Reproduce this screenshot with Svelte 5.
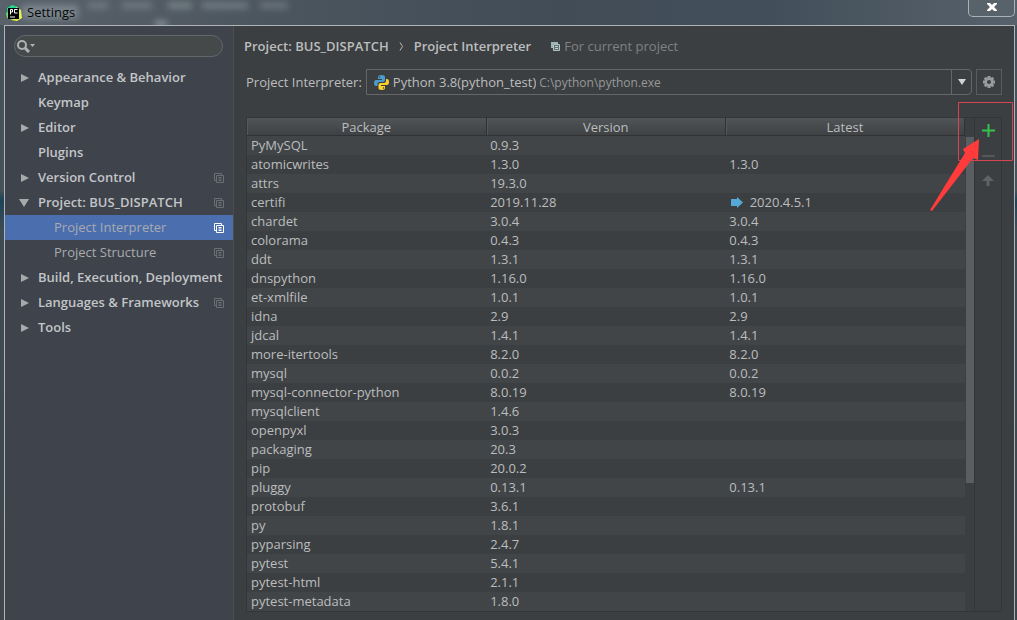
<script lang="ts">
  type TreeItem = { label: string; arrow?: 'right' | 'down'; child?: boolean; scoped?: boolean };
  type Package = { name: string; version: string; latest?: string; upgrade?: boolean };

  const tree: TreeItem[] = [
    { label: 'Appearance & Behavior', arrow: 'right' },
    { label: 'Keymap' },
    { label: 'Editor', arrow: 'right' },
    { label: 'Plugins' },
    { label: 'Version Control', arrow: 'right', scoped: true },
    { label: 'Project: BUS_DISPATCH', arrow: 'down', scoped: true },
    { label: 'Project Interpreter', child: true, scoped: true },
    { label: 'Project Structure', child: true, scoped: true },
    { label: 'Build, Execution, Deployment', arrow: 'right' },
    { label: 'Languages & Frameworks', arrow: 'right', scoped: true },
    { label: 'Tools', arrow: 'right' }
  ];

  const packages: Package[] = [
    { name: 'PyMySQL', version: '0.9.3' },
    { name: 'atomicwrites', version: '1.3.0', latest: '1.3.0' },
    { name: 'attrs', version: '19.3.0' },
    { name: 'certifi', version: '2019.11.28', latest: '2020.4.5.1', upgrade: true },
    { name: 'chardet', version: '3.0.4', latest: '3.0.4' },
    { name: 'colorama', version: '0.4.3', latest: '0.4.3' },
    { name: 'ddt', version: '1.3.1', latest: '1.3.1' },
    { name: 'dnspython', version: '1.16.0', latest: '1.16.0' },
    { name: 'et-xmlfile', version: '1.0.1', latest: '1.0.1' },
    { name: 'idna', version: '2.9', latest: '2.9' },
    { name: 'jdcal', version: '1.4.1', latest: '1.4.1' },
    { name: 'more-itertools', version: '8.2.0', latest: '8.2.0' },
    { name: 'mysql', version: '0.0.2', latest: '0.0.2' },
    { name: 'mysql-connector-python', version: '8.0.19', latest: '8.0.19' },
    { name: 'mysqlclient', version: '1.4.6' },
    { name: 'openpyxl', version: '3.0.3' },
    { name: 'packaging', version: '20.3' },
    { name: 'pip', version: '20.0.2' },
    { name: 'pluggy', version: '0.13.1', latest: '0.13.1' },
    { name: 'protobuf', version: '3.6.1' },
    { name: 'py', version: '1.8.1' },
    { name: 'pyparsing', version: '2.4.7' },
    { name: 'pytest', version: '5.4.1' },
    { name: 'pytest-html', version: '2.1.1' },
    { name: 'pytest-metadata', version: '1.8.0' }
  ];

  const interpreters = [{ name: 'Python 3.8(python_test)', path: 'C:\\python\\python.exe' }];

  let query = $state('');
  let selected = $state('Project Interpreter');
  let interpreter = $state(interpreters[0]);
</script>

{#snippet copyIcon()}
  <svg class="copy-icon" width="10" height="10" viewBox="0 0 10 10" fill="none" stroke="currentColor" aria-hidden="true">
    <path d="M2.5 7.5h-2v-7h7v2"></path>
    <path d="M2.5 2.5h7v7h-7z"></path>
    <path d="M4.5 4.5h3M4.5 6h3M4.5 7.5h3"></path>
  </svg>
{/snippet}

<div class="window">
  <header class="titlebar">
    <svg class="glass" viewBox="0 0 340 26" width="340" height="26" aria-hidden="true">
      <defs>
        <filter id="soft" x="-20%" y="-50%" width="140%" height="200%"><feGaussianBlur stdDeviation="3"></feGaussianBlur></filter>
      </defs>
      <g filter="url(#soft)" fill="#a9b4ba">
        <rect x="22" y="5" width="56" height="14" opacity="0.45"></rect>
        <rect x="88" y="2" width="20" height="7" opacity="0.3"></rect>
        <rect x="122" y="2" width="30" height="7" opacity="0.3"></rect>
        <rect x="168" y="2" width="24" height="7" opacity="0.4"></rect>
        <rect x="202" y="2" width="46" height="7" opacity="0.35"></rect>
        <rect x="260" y="2" width="28" height="7" opacity="0.3"></rect>
        <rect x="155" y="21" width="12" height="5" opacity="0.7"></rect>
      </g>
    </svg>
    <svg class="logo" width="16" height="16" viewBox="0 0 16 16" aria-hidden="true">
      <path d="M1 3l5-3 6 2-4 8-6 4z" fill="#21d789"></path>
      <path d="M10 2l5 3 1 8-5 3-6-1 4-5z" fill="#e8f04a"></path>
      <path d="M0 8l4-2 3 9-6-2z" fill="#6be26a"></path>
      <rect x="2" y="3" width="11" height="11" fill="#050505"></rect>
      <path d="M4.500 9.500v-5h2v2.500h-2M11.500 4.500h-3v3.500h3M4 12h5" fill="none" stroke="#fff"></path>
    </svg>
    <h1>Settings</h1>
    <button class="close" aria-label="Close">
      <svg width="10" height="8" viewBox="0 0 10 8" aria-hidden="true">
        <path d="M0 0h3l2 2 2-2h3v1L7 4l3 3v1H7L5 6 3 8H0V7l3-3-3-3z" fill="#fff"></path>
      </svg>
    </button>
  </header>

  <div class="body">
    <aside class="sidebar">
      <div class="search">
        <svg width="20" height="14" viewBox="0 0 20 14" aria-hidden="true">
          <circle cx="6" cy="6" r="4" fill="none" stroke="#afb1b3" stroke-width="2"></circle>
          <path d="M9 9l4 4" stroke="#afb1b3" stroke-width="3"></path>
          <path d="M14 5h5l-2.500 3z" fill="#afb1b3"></path>
        </svg>
        <input type="text" aria-label="Search settings" bind:value={query} />
      </div>
      <nav>
        <ul>
          {#each tree as item}
            <li>
              <button
                class="tree-item"
                class:child={item.child}
                class:selected={selected === item.label}
                onclick={() => (selected = item.label)}
              >
                <svg class="arrow" width="10" height="10" viewBox="0 0 10 10" fill="currentColor" aria-hidden="true">
                  {#if item.arrow === 'right'}
                    <path d="M2 1l8 4-8 4z"></path>
                  {:else if item.arrow === 'down'}
                    <path d="M0 1h10L5 9z"></path>
                  {/if}
                </svg>
                <span class="label">{item.label}</span>
                {#if item.scoped}
                  {@render copyIcon()}
                {/if}
              </button>
            </li>
          {/each}
        </ul>
      </nav>
    </aside>

    <main>
      <div class="breadcrumb">
        <h2>Project: BUS_DISPATCH</h2>
        <svg width="5" height="9" viewBox="0 0 5 9" fill="none" stroke="#bbb" aria-hidden="true">
          <path d="M1 0.500l2.500 4-2.500 4"></path>
        </svg>
        <h2>Project Interpreter</h2>
        <span class="scope">
          <svg width="9" height="9" viewBox="0 0 9 9" aria-hidden="true">
            <path d="M0 0h7v2H2v4H0z" fill="#9fb4b4"></path>
            <path d="M2.500 2.500h6v6h-6z" fill="#5f7272" stroke="#b4c4c4"></path>
            <path d="M4 4.500h3M4 6.500h3" stroke="#c3cfcf"></path>
          </svg>
          For current project
        </span>
      </div>

      <div class="interpreter">
        <label for="interpreter">Project Interpreter:</label>
        <div class="combo">
          <svg class="python" width="15" height="15" viewBox="0 0 15 15" aria-hidden="true">
            <path d="M7.400 0C4.500 0 4 1 4 2v2h4v1H2C0.800 5 0 6 0 8s0.800 3 2 3h1.500V9c0-1 0.800-2 2-2H9c1 0 2-0.800 2-2V2c0-1.300-1.200-2-3.600-2z" fill="#4b9cc9"></path>
            <path d="M7.600 15c2.900 0 3.400-1 3.400-2v-2H7v-1h6c1.200 0 2-1 2-3s-0.800-3-2-3h-1v2c0 1-1 2-2 2H6.500c-1.200 0-2 0.800-2 2v3c0 1.300 0.700 2 3.100 2z" fill="#f9cf2e"></path>
            <circle cx="5.500" cy="2" r="0.700" fill="#3c3f41"></circle>
            <circle cx="9.500" cy="13" r="0.700" fill="#3c3f41"></circle>
          </svg>
          <select id="interpreter" bind:value={interpreter}>
            {#each interpreters as entry}
              <option value={entry}>{entry.name}</option>
            {/each}
          </select>
          <span class="path">{interpreter.path}</span>
          <span class="drop" aria-hidden="true">
            <svg width="10" height="6" viewBox="0 0 10 6"><path d="M1 0h8L5 6z" fill="#d0d2d3"></path></svg>
          </span>
        </div>
        <button class="gear" aria-label="Interpreter options">
          <svg width="14" height="14" viewBox="-7 -7 14 14" aria-hidden="true">
            {#each [0, 45, 90, 135] as angle}
              <rect x="-1.500" y="-6" width="3" height="12" fill="#999b9d" transform="rotate({angle})"></rect>
            {/each}
            <circle r="3.300" fill="none" stroke="#999b9d" stroke-width="2.400"></circle>
            <circle r="2" fill="#3c3f41"></circle>
          </svg>
        </button>
      </div>

      <div class="packages">
        <div class="table-wrap">
          <table>
            <thead>
              <tr>
                <th>Package</th>
                <th>Version</th>
                <th>Latest</th>
              </tr>
            </thead>
            <tbody>
              {#each packages as pkg}
                <tr>
                  <td>{pkg.name}</td>
                  <td>{pkg.version}</td>
                  <td>
                    {#if pkg.upgrade}
                      <svg class="upgrade" width="12" height="11" viewBox="0 0 12 11" aria-label="Upgrade available">
                        <path d="M0 2h6V0l6 5.500L6 11V9H0z" fill="#56a8d6"></path>
                      </svg>
                    {/if}
                    {pkg.latest ?? ''}
                  </td>
                </tr>
              {/each}
            </tbody>
          </table>
        </div>
        <div class="scrollbar"><div class="thumb"></div></div>
        <div class="toolbar">
          <button aria-label="Install package">
            <svg width="13" height="13" viewBox="0 0 13 13" aria-hidden="true"><path d="M6.500 0v13M0 6.500h13" stroke="#35c24d" stroke-width="2"></path></svg>
          </button>
          <button aria-label="Uninstall package" disabled>
            <svg width="13" height="13" viewBox="0 0 13 13" aria-hidden="true"><path d="M0 7h13" stroke="#55585a" stroke-width="2"></path></svg>
          </button>
          <button aria-label="Upgrade package" disabled>
            <svg width="12" height="12" viewBox="0 0 12 12" aria-hidden="true"><path d="M6 0l6 6H7.500v5h-3V6H0z" fill="#606365"></path></svg>
          </button>
        </div>
      </div>
    </main>
  </div>

  <!-- callout pointing at the install button -->
  <svg class="callout" width="86" height="112" viewBox="0 0 86 112" aria-hidden="true">
    <path d="M28.500 1.500h54v58h-54z" fill="none" stroke="#d94452"></path>
    <path d="M49 38L33 48l2 4L0 109l2 1 41-53 5 2z" fill="#ff3b3b"></path>
  </svg>
</div>

<style>
  :global(body) {
    background: #3c3f41;
  }

  .window {
    position: relative;
    display: flex;
    flex-direction: column;
    min-height: 100vh;
    box-sizing: border-box;
    padding: 0 2px 0 4px;
    background: linear-gradient(#50585f, #45515a 30px, #46525a 190px, #1d4457 200px, #3f4b54 230px, #3f464b);
    color: #bbbdbf;
    font-family: 'Open Sans', 'Noto Sans', sans-serif;
    font-size: 13px;
    line-height: 19px;
  }

  h1,
  h2,
  ul {
    margin: 0;
    padding: 0;
    font-size: inherit;
  }

  h2 {
    font-weight: 600;
  }

  button,
  input,
  select {
    padding: 0;
    border: none;
    outline: none;
    background: none;
    color: inherit;
    font: inherit;
  }

  svg {
    flex-shrink: 0;
  }

  .titlebar {
    position: relative;
    display: flex;
    align-items: center;
    gap: 5px;
    height: 25px;
    margin: 0 -2px 0 -4px;
    padding: 0 2px 0 6px;
    background: linear-gradient(90deg, #59626a, #4a545d 30%, #414c57 55%, #424e59 75%, #56616b);
  }

  .glass {
    position: absolute;
    top: 0;
    left: 0;
  }

  .logo,
  h1 {
    position: relative;
  }

  h1 {
    flex: 1;
    color: #080808;
    font-weight: 400;
  }

  .close {
    display: flex;
    align-items: center;
    justify-content: center;
    align-self: flex-start;
    width: 47px;
    height: 17px;
    padding-bottom: 3px;
    border: 1px solid #aab1b7;
    border-top: none;
    border-radius: 0 0 5px 5px;
    background: #58626b;
  }

  .body {
    display: flex;
    flex: 1;
    border: 1px solid #aeb4b8;
    border-bottom: none;
    background: #3c3f41;
  }

  .sidebar {
    display: flex;
    flex-direction: column;
    gap: 8px;
    width: 228px;
    flex-shrink: 0;
    padding-top: 9px;
    border-right: 1px solid #4a4c4f;
    background: #3e434c;
  }

  .search {
    display: flex;
    align-items: center;
    height: 20px;
    margin: 0 10px 0 9px;
    border: 1px solid #63676a;
    border-radius: 11px;
    background: #45494a;
  }

  .search svg {
    margin-left: 1px;
  }

  .search input {
    flex: 1;
    min-width: 0;
  }

  ul {
    list-style: none;
  }

  .tree-item {
    display: flex;
    align-items: center;
    width: 100%;
    height: 25px;
    padding: 0 9px 0 14px;
    color: #c3c5c7;
    font-weight: 600;
    text-align: left;
  }

  .tree-item .label {
    flex: 1;
    margin-left: 9px;
    white-space: nowrap;
  }

  .tree-item.child {
    color: #a9abae;
    font-weight: 400;
  }

  .tree-item.child .label {
    margin-left: 25px;
  }

  .tree-item.selected {
    background: #4b6eaf;
  }

  .arrow {
    color: #a7aaad;
  }

  .copy-icon {
    color: #6b6f75;
  }

  .selected .copy-icon {
    color: #fff;
  }

  main {
    display: flex;
    flex: 1;
    flex-direction: column;
    min-width: 0;
    padding: 11px 12px 8px;
  }

  .breadcrumb {
    display: flex;
    align-items: center;
    gap: 10px;
    margin-bottom: 13px;
    margin-left: -2px;
  }

  .scope {
    display: flex;
    align-items: center;
    gap: 4px;
    margin-left: 10px;
    color: #7f8183;
  }

  .interpreter {
    display: flex;
    align-items: center;
    gap: 4px;
    height: 26px;
    margin-bottom: 22px;
  }

  .combo {
    display: flex;
    flex: 1;
    align-items: center;
    align-self: stretch;
    border: 1px solid #646668;
    border-radius: 0 4px 4px 0;
  }

  .python {
    margin: 0 4px 0 7px;
  }

  select {
    appearance: none;
    field-sizing: content;
  }

  .path {
    flex: 1;
    margin-left: 3px;
    color: #96989a;
    font-size: 12px;
  }

  .drop {
    display: flex;
    align-items: center;
    align-self: stretch;
    justify-content: center;
    width: 19px;
    border-left: 1px solid #646668;
  }

  .gear {
    display: flex;
    align-items: center;
    align-self: stretch;
    justify-content: center;
    width: 26px;
    border: 1px solid #5a5d5f;
  }

  .packages {
    display: flex;
    flex: 1;
    border: 1px solid #333638;
  }

  .table-wrap {
    flex: 1;
    min-width: 0;
  }

  table {
    width: 100%;
    border-collapse: collapse;
    table-layout: fixed;
  }

  th {
    height: 17px;
    padding: 0;
    border-right: 1px solid #2f3133;
    border-bottom: 1px solid #303234;
    background: linear-gradient(#505456, #3f4244);
    box-shadow: inset 1px 0 #55585a;
    font-weight: 400;
    line-height: 16px;
  }

  td {
    height: 19px;
    padding: 0 4px;
    white-space: nowrap;
  }

  tbody tr:nth-child(odd) {
    background: #414547;
  }

  .upgrade {
    margin: 0 3px 0 2px;
    vertical-align: -1px;
  }

  .scrollbar {
    width: 8px;
    padding: 19px 0 0 1px;
    border-right: 1px solid #333638;
  }

  .thumb {
    height: 73%;
    background: #5a5e60;
  }

  .toolbar {
    display: flex;
    flex-direction: column;
    width: 26px;
  }

  .toolbar button {
    display: flex;
    align-items: center;
    justify-content: center;
    height: 25px;
  }

  .callout {
    position: absolute;
    top: 101px;
    right: 1px;
    pointer-events: none;
  }
</style>
